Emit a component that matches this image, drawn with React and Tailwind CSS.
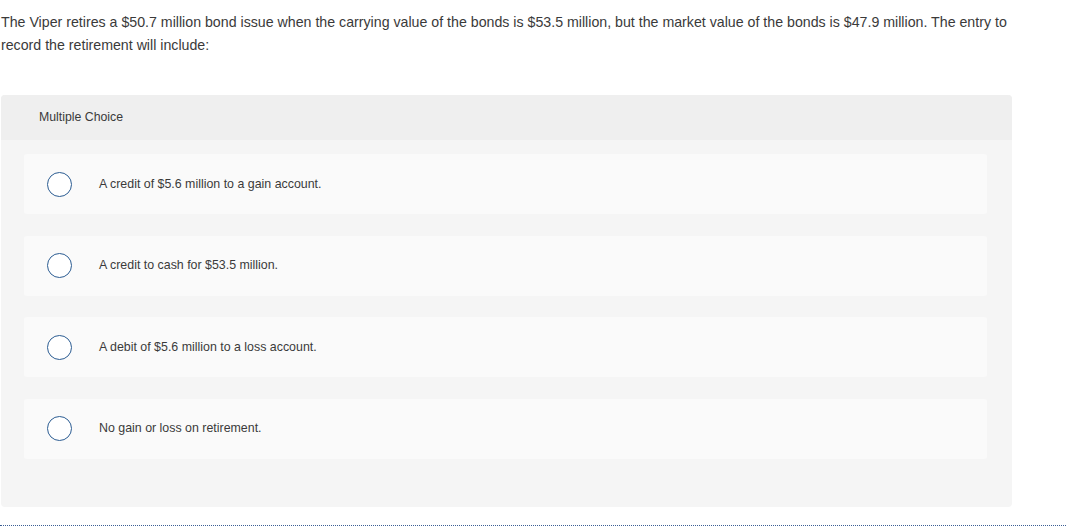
import React from "react";

const options = [
  "A credit of $5.6 million to a gain account.",
  "A credit to cash for $53.5 million.",
  "A debit of $5.6 million to a loss account.",
  "No gain or loss on retirement.",
];

export default function App() {
  return (
    <div className="w-[1066px] h-[528px] bg-white font-['Liberation_Sans',Arial,sans-serif] text-[#333] flex flex-col">
      <p className="pl-[1px] pt-[11px] pr-[40px] text-[14.2px] leading-[23px] text-[#3a3a3a]">
        The Viper retires a $50.7 million bond issue when the carrying value of the bonds is $53.5 million, but the market value of the bonds is $47.9 million. The entry to record the retirement will include:
      </p>
      <div className="ml-[1px] mt-[38px] w-[1011px] h-[412px] rounded-[4px] bg-[#f5f5f5] flex flex-col">
        <div className="h-[45px] rounded-t-[4px] bg-[#efefef] flex items-center pl-[38px] text-[12.3px] text-[#3a3a3a]">
          Multiple Choice
        </div>
        <div className="flex flex-col gap-[21.5px] pt-[14px] pl-[23px] pr-[25px]">
          {options.map((o) => (
            <div key={o} className="h-[60px] rounded-[3px] bg-[#fafafa] flex items-center pl-[23px]">
              <span className="w-[25px] h-[25px] rounded-full border-[1.5px] border-[#2b5c92] bg-white shrink-0" />
              <span className="ml-[27px] text-[12.4px] text-[#3a3a3a]">{o}</span>
            </div>
          ))}
        </div>
      </div>
      <div className="mt-[18px] border-t-[1.5px] border-dotted border-[#3c5f95]" />
    </div>
  );
}
